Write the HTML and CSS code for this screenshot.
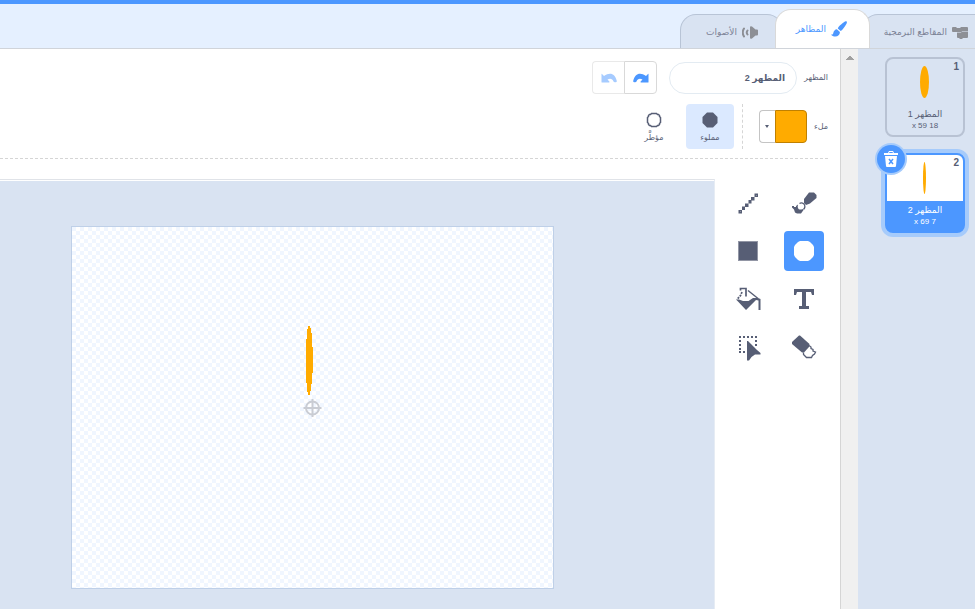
FILE: index.html
```html
<!DOCTYPE html>
<html lang="ar" dir="rtl">
<head>
<meta charset="utf-8">
<title>المظاهر</title>
<link rel="stylesheet" href="styles.css">
</head>
<body>
<div class="menu-edge"></div>
<nav class="tabs">
  <button class="tab tab-code" type="button">
    <svg class="tab-icon" width="16" height="16" viewBox="0 0 16 16"><path d="M1 3h3l1 1h3l1-1h6q1 0 1 1v9q0 1-1 1h-4l-1 1H8l-1-1H6q-1 0-1-1V8H1Q0 8 0 7V4q0-1 1-1z" fill="#8d8f95"/><path d="M5 8.500h4l1-1h6" fill="none" stroke="#b9bfca"/></svg>
    <span>المقاطع البرمجية</span>
  </button>
  <button class="tab tab-active" type="button">
    <svg class="tab-icon" width="16" height="16" viewBox="0 0 16 16"><path d="M15.600.4c.7.6.2 1.800-.7 3.300-1.300 2.300-3.300 5.200-5.200 6.300L6.800 7.400C8.100 5 12 1.600 14 .6c.7-.4 1.300-.4 1.600-.2zM5.900 8.300l3 2.700c.1 2.400-1.800 4.500-4.600 4.500-1.900 0-3.300-.8-4.200-2.100 1.300.3 2-.3 2.200-1.500.4-2 1.700-3.400 3.600-3.600z" fill="#4c97ff"/></svg>
    <span>المظاهر</span>
  </button>
  <button class="tab tab-sounds" type="button">
    <svg class="tab-icon" width="16" height="16" viewBox="0 0 16 16"><path d="M16 6.500v4q0 1-1 1h-1.500L10 14.500q-2 1-2-1v-10q0-2 2-1l3.500 3H15q1 0 1 1z" fill="#8d8f95"/><path d="M5.500 6.500q-1.500 2 0 4M2 4.500q-2.500 4 0 8" fill="none" stroke="#8d8f95" stroke-width="2" stroke-linecap="round"/></svg>
    <span>الأصوات</span>
  </button>
</nav>
<main class="workspace">
  <aside class="costumes">
    <button class="card" type="button">
      <span class="number">1</span>
      <span class="preview"><svg width="10" height="32" viewBox="0 0 10 32"><ellipse cx="4.500" cy="16" rx="4.500" ry="16" fill="#ffab00"/></svg></span>
      <span class="caption"><span>المظهر 1</span><small dir="ltr">x 59 18</small></span>
    </button>
    <div class="card-slot">
      <button class="card card-selected" type="button">
        <span class="number">2</span>
        <span class="preview"><svg width="4" height="32" viewBox="0 0 4 32"><ellipse cx="1.500" cy="16" rx="1.500" ry="16" fill="#ffab00"/></svg></span>
        <span class="caption"><span>المظهر 2</span><small dir="ltr">x 69 7</small></span>
      </button>
      <button class="remove" type="button" aria-label="حذف">
        <svg width="14" height="16" viewBox="0 0 14 16"><path d="M1 5h12l-1 10q0 1-1 1H3q-1 0-1-1z" fill="#fff"/><path d="M4.500 2.500l.5-2h4l.5 2" stroke="#fff" fill="none"/><path d="M5 8l4 5M9 8l-4 5" stroke="#4c97ff" stroke-width="1.500" fill="none"/><path d="M0 2h14v2H0z" fill="#fff"/></svg>
      </button>
    </div>
  </aside>
  <div class="scrollbar"><svg width="8" height="4" viewBox="0 0 8 4" shape-rendering="crispEdges"><path d="M3 0h2v1h1v1h1v1h1v1H0V3h1V2h1V1h1z" fill="#a0a0a0"/></svg></div>
  <section class="editor">
    <div class="controls">
      <div class="row">
        <label for="costume-name">المظهر</label>
        <input id="costume-name" class="name" type="text" value="المظهر 2">
        <div class="history">
          <button type="button" aria-label="إعادة"><svg width="16" height="10" viewBox="0 0 16 10"><path d="M15.500 1v8q0 .5-.5.500H8q-1-.3-.3-1L9.500 6.500C6.500 5 4.500 6 3.500 8.500q-.5 1-2 .7Q0 9 .2 8C2 .5 7-1 13 3l2-2q.4-.4.5 0z" fill="#4c97ff"/></svg></button>
          <button type="button" aria-label="تراجع" disabled><svg width="16" height="10" viewBox="0 0 16 10"><path d="M.5 1v8q0 .5.5.500h7q1-.3.300-1L6.500 6.500c3-1.500 5-.5 6 2q.5 1 2 .7 1.500-.2 1.300-1.200C14 .5 9-1 3 3L1 1Q.6.600.5 1z" fill="#a6cbff"/></svg></button>
        </div>
      </div>
      <div class="row row-fill">
        <span>ملء</span>
        <button class="color" type="button" aria-label="لون الملء"><span class="swatch"></span><span class="drop"><svg width="4" height="3" viewBox="0 0 4 3"><path d="M0 0h4L2 3z" fill="#575e75"/></svg></span></button>
        <div class="modes">
          <button class="mode mode-on" type="button"><svg width="16" height="16" viewBox="0 0 16 16"><path d="M5 .5h6l4.500 4.500v6L11 15.500H5L.5 11V5z" fill="#575e75"/></svg><span>مملوء</span></button>
          <button class="mode" type="button"><svg width="16" height="16" viewBox="0 0 16 16"><path d="M5.500 1.500h5l1 1h1l1 1v1l1 1v5l-1 1v1l-1 1h-1l-1 1h-5l-1-1h-1l-1-1v-1l-1-1v-5l1-1v-1l1-1h1z" fill="#fff" stroke="#575e75" stroke-width="1.500"/></svg><span>مؤطَّر</span></button>
        </div>
      </div>
    </div>
    <div class="paint">
      <div class="tools">
        <button class="tool" type="button" aria-label="فرشاة"><svg viewBox="0 0 24 24"><path d="M17 1.500h5l2.500 2.500v3L18 12.500l-4 1.500-2-2V8z"/><path d="M7.500 12.500q2-1.500 4.500.5 2 3-.5 5.500" fill="none" stroke="#575e75" stroke-width="1.300"/><path d="M0 15h2v1h2v-1l2-1.500q-1 3 .5 4.500 2 1 4 0l1 1-2.500 3.500H5l-2-1-1-3-2-2z"/></svg></button>
        <button class="tool" type="button" aria-label="خط"><svg viewBox="0 0 24 24"><path d="M2.500 19h3.500v3.500H2.500zm3.500-3.500h3v3.500H6zM9 12.500h3.500V16H9zm3.500-3.500h3v3.500h-3zM15 6h3.500v3.500H15zM18.500 2.500H22V6h-3.500z"/><path d="M4 20h1v1H4zM20 4h1v1h-1z" opacity=".3" fill="#fff"/></svg></button>
        <button class="tool tool-on" type="button" aria-label="دائرة"><svg viewBox="0 0 24 24"><path d="M8 2h8l2 1 3 3 1 2v8l-1 2-3 3-2 1H8l-2-1-3-3-1-2V8l1-2 3-3z"/></svg></button>
        <button class="tool" type="button" aria-label="مستطيل"><svg viewBox="0 0 24 24"><path d="M2 2h20v20H2z" opacity=".65"/><path d="M3 3h18v18H3z"/></svg></button>
        <button class="tool" type="button" aria-label="نص"><svg viewBox="0 0 24 24"><path d="M2 2h20v6h-2l-1-3h-5v14h3v3H7v-3h3V5H5L4 8H2z"/></svg></button>
        <button class="tool" type="button" aria-label="تعبئة"><svg viewBox="0 0 24 24"><path d="M4.500 3.500V1.500H10v8" fill="none" stroke="#575e75" stroke-width="1.700"/><path d="M12 3.500l10 8" fill="none" stroke="#575e75" stroke-width="1.500"/><path d="M6 5L4.500 8.500 1 12.500" fill="none" stroke="#575e75" stroke-width="1.700" stroke-dasharray="2 1"/><path d="M0 12.500l2 2 8 8.500 10-10 2.500.5V23h2V12l-2.500-1h-5l-4.500 3H7l-4-1.500z"/></svg></button>
        <button class="tool" type="button" aria-label="ممحاة"><svg viewBox="0 0 24 24"><path d="M7 .5h1l9.500 8.500-.5 3-5 5.500h-2L0 9V7z"/><path d="M17 10.500l2 1.500v1.500l2 1v1.500l2.500 1-1 2-2 1.500-1 2h-5l-1.500-1.500-1.500-1.500V17.500" fill="none" stroke="#575e75" stroke-width="1.300"/></svg></button>
        <button class="tool" type="button" aria-label="تحديد"><svg viewBox="0 0 24 24"><path d="M3 1h2v2H3zm4 0h2v2H7zm4 0h2v2h-2zm4 0h2v2h-2zm4 0h2v2h-2zM3 5h2v2H3zm0 4h2v2H3zm0 4h2v2H3zm0 3h2v2H3zm4 0h2v2H7zM19 5h2v2h-2zm0 4h2v2h-2zM11 6h1l3 3 3 3 3 3 3.500 3v1.500H19L15.500 22 13 25.500h-2z"/></svg></button>
      </div>
      <div class="canvas">
        <svg class="paper" viewBox="0 0 481 361">
          <defs><pattern id="checks" width="8" height="8" patternUnits="userSpaceOnUse"><path d="M0 0h4v4H0zM4 4h4v4H4z" fill="#f0f6ff"/></pattern></defs>
          <path d="M0 0h481v361H0z" fill="#fff"/>
          <path d="M0 0h481v361H0z" fill="url(#checks)"/>
          <path d="M236 99h2v2h1v5h1v14h1v26h-1v11h-1v7h-1v4h-2v-3h-1v-9h-1v-44h1v-10h1z" fill="#ffab00"/>
          <g fill="none" stroke="#c9ccd3" stroke-width="2"><circle cx="240.500" cy="181" r="6.500"/><path d="M240.500 172v18M231.500 181h18"/></g>
        </svg>
      </div>
    </div>
  </section>
</main>
</body>
</html>
```
FILE: styles.css
```css
* { box-sizing: border-box; }
body {
  margin: 0;
  height: 100vh;
  display: flex;
  flex-direction: column;
  overflow: hidden;
  background: #e5f0ff;
  color: #575e75;
  font-family: "Liberation Sans", "DejaVu Sans", sans-serif;
  font-size: 9px;
}
button, input { font: inherit; color: inherit; padding: 0; margin: 0; }
svg { display: block; flex: none; }

.menu-edge { height: 4px; background: #4c97ff; flex: none; }
.tabs { display: flex; align-items: flex-end; height: 44px; flex: none; }
.tab {
  display: flex;
  align-items: center;
  gap: 5px;
  height: 34px;
  border: 1px solid #b8c4d6;
  border-bottom: 0;
  border-radius: 16px 16px 0 0;
  background: #d9e3f2;
  color: #7c8296;
  white-space: nowrap;
}
.tab-code { width: 113px; padding-right: 7px; margin-left: -8px; border-right: 0; border-top-right-radius: 0; }
.tab-active {
  position: relative;
  width: 95px;
  height: 39px;
  padding-right: 22px;
  border-color: #d9d9d9;
  background: #fff;
  color: #4c97ff;
}
.tab-sounds { width: 103px; padding-right: 24px; margin-right: -8px; }

.workspace { display: flex; flex: 1; min-height: 0; border-top: 1px solid #d0d4da; }
.costumes {
  width: 117px;
  flex: none;
  padding: 8px 10px;
  background: #d9e3f2;
  display: flex;
  flex-direction: column;
  gap: 16px;
}
.card {
  position: relative;
  display: flex;
  flex-direction: column;
  width: 80px;
  height: 80px;
  border: 2px solid #b8c2d3;
  border-radius: 8px;
  background: #d9e3f2;
  overflow: hidden;
}
.card-slot { position: relative; width: 80px; height: 80px; }
.card-selected {
  border-color: #4c97ff;
  background: #4c97ff;
  color: #fff;
  box-shadow: 0 0 0 4px #a6cbfb;
}
.number { position: absolute; top: 2px; right: 4px; font-size: 10px; font-weight: bold; color: #575e75; }
.preview { display: flex; align-items: center; justify-content: center; align-self: stretch; height: 46px; }
.card-selected .preview { background: #fff; }
.caption { align-self: stretch; display: flex; flex-direction: column; align-items: center; padding-top: 3px; line-height: 13px; }
.caption small { font-size: 8px; line-height: 10px; }
.remove {
  position: absolute;
  top: -8px;
  left: -8px;
  width: 28px;
  height: 28px;
  display: grid;
  place-items: center;
  border: 0;
  border-radius: 50%;
  background: #4c97ff;
  box-shadow: 0 0 0 2px #a6cbfb;
}
.scrollbar { width: 17px; flex: none; background: #f0f0f0; display: flex; justify-content: center; padding-top: 7px; }

.editor { flex: 1; min-width: 0; display: flex; flex-direction: column; background: #fff; border-right: 1px solid #d5d5d5; }
.controls { margin-right: 12px; padding-top: 12px; padding-bottom: 9px; border-bottom: 1px dashed #d5d5d5; }
.row { display: flex; align-items: center; gap: 7px; height: 33px; font-size: 8px; }
.row-fill { height: 45px; margin-top: 10px; }
.name {
  width: 128px;
  height: 32px;
  padding: 0 11px;
  border: 1px solid #e3ebf2;
  border-radius: 16px;
  font-size: 9px;
  font-weight: bold;
  background: #fff;
}
.history { display: flex; margin-right: 5px; }
.history button {
  width: 33px;
  height: 33px;
  display: grid;
  place-items: center;
  background: #fff;
  border: 1px solid #d9d9d9;
  border-radius: 0 4px 4px 0;
}
.history button + button { border-right: 0; border-color: #e9e9e9; border-radius: 4px 0 0 4px; width: 32px; }
.color { width: 48px; height: 33px; display: flex; border: 0; background: none; }
.swatch { width: 32px; height: 33px; background: #ffab00; border: 1px solid #c08000; border-radius: 0 4px 4px 0; }
.drop { flex: 1; height: 33px; display: grid; place-items: center; border: 1px solid #c4c4c4; border-right: 0; border-radius: 4px 0 0 4px; }
.modes { display: flex; gap: 8px; align-self: stretch; margin-right: 9px; padding-right: 8px; border-right: 1px dashed #d5d5d5; }
.mode {
  width: 48px;
  display: flex;
  flex-direction: column;
  align-items: center;
  justify-content: center;
  gap: 4px;
  padding-top: 2px;
  border: 0;
  border-radius: 4px;
  background: none;
  line-height: 12px;
}
.mode-on { background: #dbe9ff; }

.paint { display: flex; flex: 1; min-height: 0; padding-top: 20px; }
.tools {
  display: grid;
  grid-template-columns: 40px 40px;
  grid-auto-rows: 40px;
  gap: 8px 16px;
  padding: 4px 16px 0 13px;
}
.tool { display: grid; place-items: center; border: 0; border-radius: 4px; background: none; fill: #575e75; }
.tool svg { width: 24px; height: 24px; overflow: visible; }
.tool-on { background: #4c97ff; fill: #fff; }
.canvas {
  flex: 1;
  min-width: 0;
  padding: 46px 160px 0 0;
  background: #d9e3f2;
  border-top: 1px solid #e0e3e8;
  border-right: 1px solid #e6ecf4;
  box-shadow: inset 0 1px #fff;
}
.paper { width: 483px; height: 363px; border: 1px solid #bfd0e8; }
```
